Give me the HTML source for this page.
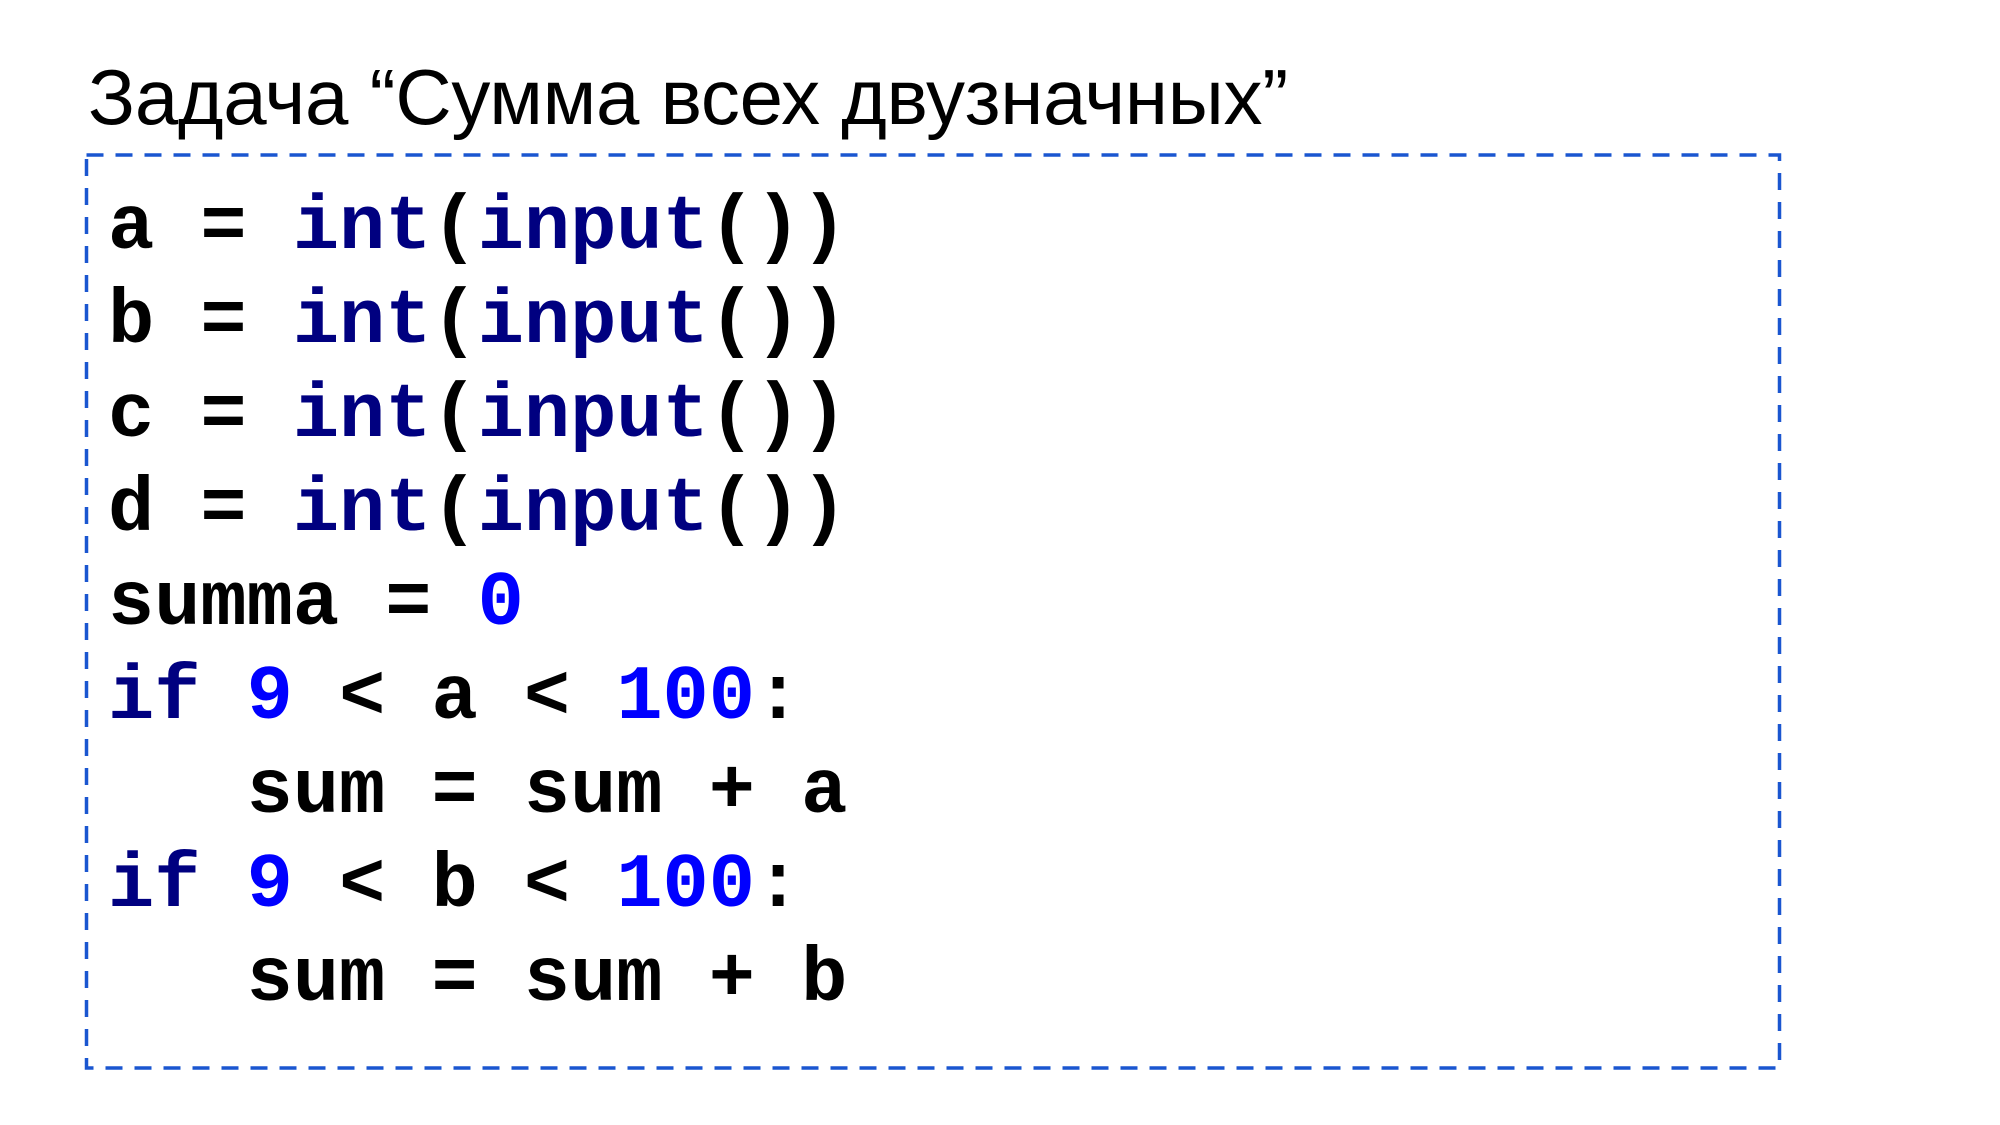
<!DOCTYPE html>
<html><head><meta charset="utf-8"><style>
html,body{margin:0;padding:0;background:#fff;width:2000px;height:1125px;overflow:hidden}
.t{position:absolute;left:88px;top:58px;font:78px/78px "Liberation Sans",sans-serif;color:#000;white-space:pre;letter-spacing:-0.25px}
.c{position:absolute;left:108px;top:182px;font:bold 77px/94px "Liberation Mono",monospace;color:#000;white-space:pre}
.k{color:#000080}.n{color:#0000ff}
svg{position:absolute;left:0;top:0}
</style></head><body>
<svg width="2000" height="1125"><rect x="86.5" y="155" width="1693" height="913" fill="none" stroke="#1a56d0" stroke-width="3.5" stroke-dasharray="17 12"/></svg>
<div class="t">Задача “Сумма всех двузначных”</div>
<div class="c">a = <span class="k">int</span>(<span class="k">input</span>())
b = <span class="k">int</span>(<span class="k">input</span>())
c = <span class="k">int</span>(<span class="k">input</span>())
d = <span class="k">int</span>(<span class="k">input</span>())
summa = <span class="n">0</span>
<span class="k">if</span> <span class="n">9</span> &lt; a &lt; <span class="n">100</span>:
   sum = sum + a
<span class="k">if</span> <span class="n">9</span> &lt; b &lt; <span class="n">100</span>:
   sum = sum + b</div>
</body></html>
